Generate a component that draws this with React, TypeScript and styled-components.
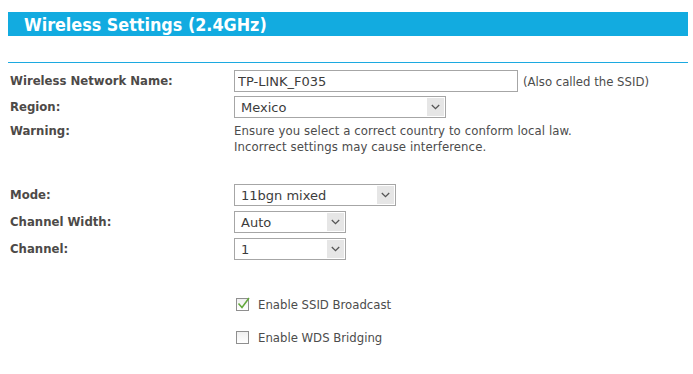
import React from "react";
import styled, { createGlobalStyle } from "styled-components";

const Global = createGlobalStyle`
  html, body { margin: 0; padding: 0; background: #ffffff; }
  body { font-family: "DejaVu Sans Condensed", "DejaVu Sans", Tahoma, sans-serif; color: #4c4c4c; }
`;

const Page = styled.div`
  padding: 12px 5px 0 8px;
  width: 680px;
`;

const Header = styled.div`
  height: 24px;
  background: #12abe0;
  display: flex;
  align-items: center;
  padding-left: 16px;
  color: #ffffff;
  font-weight: bold;
  font-size: 17.8px;
`;

const Divider = styled.div`
  margin-top: 26px;
  height: 1px;
  background: #1ca9e0;
`;

const Row = styled.div<{ $top: number; $h?: number }>`
  display: flex;
  align-items: center;
  margin-top: ${(p) => p.$top}px;
  height: ${(p) => (p.$h ? `${p.$h}px` : "auto")};
`;

const TopRow = styled.div<{ $top: number }>`
  display: flex;
  align-items: flex-start;
  margin-top: ${(p) => p.$top}px;
`;

const Label = styled.div`
  width: 224px;
  padding-left: 2px;
  font-weight: bold;
  font-size: 13px;
  line-height: 16px;
  color: #4d4a48;
`;

const TextInput = styled.input`
  box-sizing: border-box;
  width: 284px;
  height: 22px;
  border: 1px solid #a6a6a6;
  padding: 0 3px;
  font-family: "DejaVu Sans", Verdana, sans-serif;
  font-size: 13px;
  color: #3c3c3c;
  outline: none;
`;

const Note = styled.span`
  margin-left: 5px;
  font-size: 13px;
  color: #4c4c4c;
`;

const Select = styled.div<{ $w: number }>`
  box-sizing: border-box;
  width: ${(p) => p.$w}px;
  height: 22px;
  border: 1px solid #a6a6a6;
  display: flex;
  align-items: stretch;
  padding: 1px;
  font-family: "DejaVu Sans", Verdana, sans-serif;
  font-size: 13px;
  color: #3c3c3c;
`;

const SelectValue = styled.div`
  flex: 1;
  display: flex;
  align-items: center;
  padding-left: 5px;
`;

const Arrow = styled.div`
  width: 17px;
  background: #e6e6e6;
  display: flex;
  align-items: center;
  justify-content: center;
`;

const Warn = styled.div`
  font-size: 13px;
  line-height: 16px;
  letter-spacing: 0.1px;
  color: #4c4c4c;
`;

const CheckRow = styled.div<{ $top: number }>`
  display: flex;
  align-items: center;
  height: 20px;
  margin-top: ${(p) => p.$top}px;
  padding-left: 228px;
  font-size: 13px;
  color: #4c4c4c;
`;

const Box = styled.div`
  box-sizing: border-box;
  width: 13px;
  height: 13px;
  border: 1px solid #8f8f8f;
  background: linear-gradient(#f0f0f0, #ffffff);
  margin-right: 9px;
  position: relative;
`;

const Tick = styled.svg`
  position: absolute;
  left: 0px;
  top: -3px;
`;

const Chevron = () => (
  <svg width="9" height="6" viewBox="0 0 9 6">
    <path d="M0.8 1 L4.5 4.6 L8.2 1" fill="none" stroke="#555" strokeWidth="1.3" />
  </svg>
);

const Dropdown = ({ w, value }: { w: number; value: string }) => (
  <Select $w={w}>
    <SelectValue>{value}</SelectValue>
    <Arrow>
      <Chevron />
    </Arrow>
  </Select>
);

const Checkbox = ({ checked }: { checked?: boolean }) => (
  <Box>
    {checked && (
      <Tick width="14" height="14" viewBox="0 0 14 14">
        <path d="M1.5 7.5 L5 11.5 L12 2" fill="none" stroke="#63a83b" strokeWidth="1.5" />
      </Tick>
    )}
  </Box>
);

export default function App() {
  return (
    <>
      <Global />
      <Page>
        <Header>Wireless Settings (2.4GHz)</Header>
        <Divider />
        <Row $top={7} $h={22}>
          <Label>Wireless Network Name:</Label>
          <TextInput defaultValue="TP-LINK_F035" />
          <Note>(Also called the SSID)</Note>
        </Row>
        <Row $top={4} $h={22}>
          <Label>Region:</Label>
          <Dropdown w={212} value="Mexico" />
        </Row>
        <TopRow $top={5}>
          <Label>Warning:</Label>
          <Warn>
            Ensure you select a correct country to conform local law.
            <br />
            Incorrect settings may cause interference.
          </Warn>
        </TopRow>
        <Row $top={29} $h={22}>
          <Label>Mode:</Label>
          <Dropdown w={162} value="11bgn mixed" />
        </Row>
        <Row $top={5} $h={22}>
          <Label>Channel Width:</Label>
          <Dropdown w={112} value="Auto" />
        </Row>
        <Row $top={5} $h={22}>
          <Label>Channel:</Label>
          <Dropdown w={112} value="1" />
        </Row>
        <CheckRow $top={34}>
          <Checkbox checked />
          Enable SSID Broadcast
        </CheckRow>
        <CheckRow $top={13}>
          <Checkbox />
          Enable WDS Bridging
        </CheckRow>
      </Page>
    </>
  );
}
